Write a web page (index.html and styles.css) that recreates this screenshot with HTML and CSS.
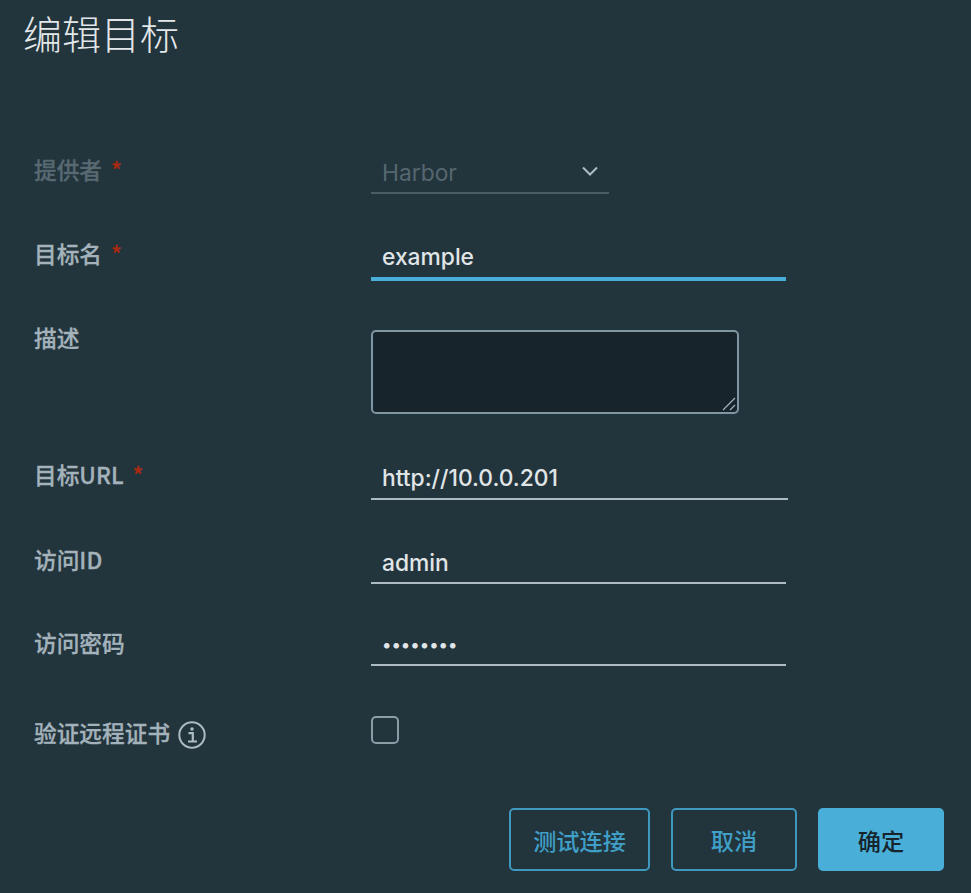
FILE: index.html
```html
<!DOCTYPE html>
<html lang="zh">
<head>
<meta charset="utf-8">
<title>编辑目标</title>
<link rel="stylesheet" href="styles.css">
</head>
<body>
<main class="modal">
  <h1 class="title">编辑目标</h1>
  <form class="form">
    <label class="label disabled">提供者<span class="star">*</span></label>
    <div class="select">
      <span>Harbor</span>
      <svg class="chevron" width="18" height="12" viewBox="0 0 18 12"><path d="M2 2.5 9 9.5 16 2.5" fill="none" stroke="#aebcc4" stroke-width="2"/></svg>
    </div>
    <label class="label">目标名<span class="star">*</span></label>
    <input class="input focus" type="text" value="example">
    <label class="label">描述</label>
    <div class="area-wrap">
      <textarea class="textarea"></textarea>
      <svg class="grip" width="14" height="14" viewBox="0 0 14 14"><path d="M1 13 13 1M8 13 13 8" fill="none" stroke="#9fb0ba" stroke-width="1.3"/></svg>
    </div>
    <label class="label">目标URL<span class="star">*</span></label>
    <input class="input wide" type="text" value="http://10.0.0.201">
    <label class="label">访问ID</label>
    <input class="input" type="text" value="admin">
    <label class="label">访问密码</label>
    <input class="input pw" type="password" value="12345678">
    <label class="label">验证远程证书
      <svg class="info" width="30" height="30" viewBox="0 0 30 30"><circle cx="15" cy="15" r="12.7" fill="none" stroke="#adbbc4" stroke-width="2"/><circle cx="15" cy="9" r="1.8" fill="#adbbc4"/><path d="M11.5 13.2h4.3v8M11 21.5h9" fill="none" stroke="#adbbc4" stroke-width="2.2"/></svg>
    </label>
    <input class="check" type="checkbox">
  </form>
  <div class="actions">
    <button type="button" class="btn outline test">测试连接</button>
    <button type="button" class="btn outline cancel">取消</button>
    <button type="button" class="btn primary">确定</button>
  </div>
</main>
</body>
</html>
```
FILE: styles.css
```css
* { box-sizing: border-box; }
html, body { margin: 0; height: 100%; }
body {
  background: #22343c;
  font-family: Inter, "Noto Sans CJK SC", sans-serif;
  overflow: hidden;
}
.modal { width: 971px; height: 893px; }
.title {
  margin: 0;
  padding-left: 23px;
  height: 156px;
  font: 300 39px/65px "Noto Sans CJK SC", sans-serif;
  color: #e3e7e9;
}
.form {
  display: grid;
  grid-template-columns: 337px 1fr;
  grid-template-rows: 84px 84px 137px 85px 83px 90px 89px;
  padding-left: 34px;
}
.label {
  display: flex;
  align-items: center;
  height: 30px;
  margin-top: -1px;
  font: 500 22.7px/30px "Noto Sans CJK SC", sans-serif;
  -webkit-text-stroke: 0.3px currentColor;
  color: #a3b2bb;
}
.label.disabled { color: #586972; }
.star { color: #a82a12; margin-left: 9px; }
.info { margin-left: 7px; margin-top: 3px; }
.select {
  display: flex;
  align-items: center;
  justify-content: space-between;
  width: 238px;
  height: 38px;
  padding: 0 10px 3px 11px;
  border-bottom: 2px solid #4a5c64;
  font-size: 22.8px;
  color: #56676f;
}
.chevron { margin-top: -3px; }
.input {
  display: block;
  width: 415px;
  height: 38px;
  padding: 0 10px 4px 11px;
  border: 0;
  border-bottom: 2px solid #adbbc4;
  background: transparent;
  outline: 0;
  font-family: inherit;
  font-size: 22.8px;
  font-weight: 500;
  color: #e0e5e8;
}
.input.focus { height: 41px; border-bottom: 4px solid #49afd9; }
.input.wide { height: 39px; width: 417px; }
.input.pw { height: 37px; padding-bottom: 5px; font-size: 17.7px; padding-left: 11px; }
.area-wrap {
  position: relative;
  width: 368px;
  height: 84px;
  margin-top: 6px;
}
.textarea {
  display: block;
  width: 100%;
  height: 100%;
  border: 2px solid #7f97a3;
  border-radius: 5px;
  background: #17242b;
  outline: 0;
  resize: none;
}
.grip { position: absolute; right: 3px; bottom: 3px; }
.check {
  appearance: none;
  width: 28px;
  height: 28px;
  margin: -3px 0 0;
  border: 2px solid #8a9ea8;
  border-radius: 5px;
  background: transparent;
}
.actions {
  display: flex;
  gap: 21px;
  padding-left: 509px;
}
.btn {
  height: 63px;
  padding: 2px 0 0;
  border-radius: 5px;
  font: 500 23.2px/1 "Noto Sans CJK SC", sans-serif;
}
.outline { background: transparent; border: 2px solid #3f98bd; color: #3f9fc6; }
.test { width: 141px; }
.cancel { width: 126px; }
.primary { width: 126px; background: #49afd9; border: 0; color: #17242b; }
```
